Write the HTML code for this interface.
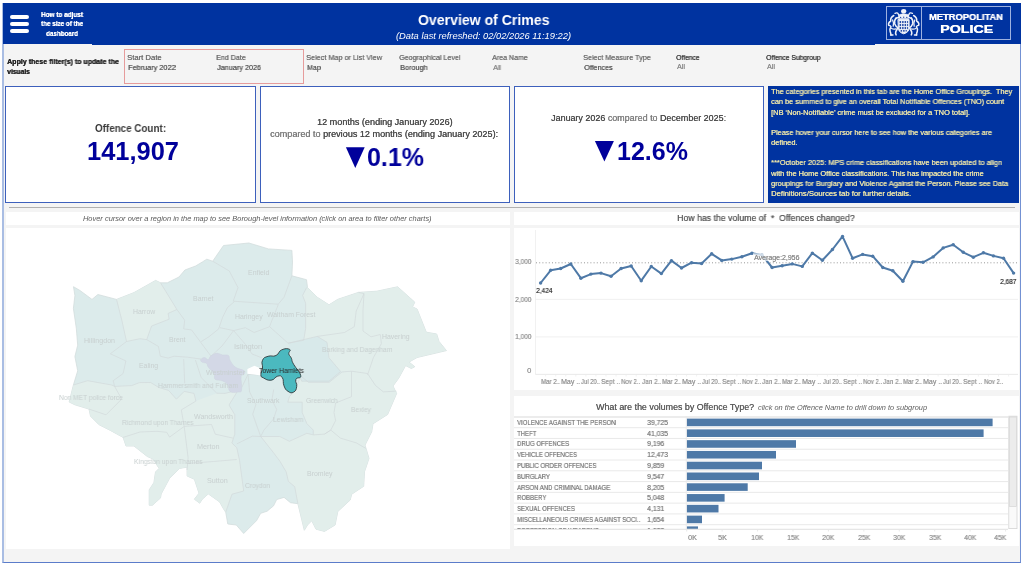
<!DOCTYPE html>
<html><head><meta charset="utf-8">
<style>
*{box-sizing:border-box;margin:0;padding:0}
html,body{width:1023px;height:565px;overflow:hidden;background:#fff;font-family:"Liberation Sans",sans-serif}
.t{position:absolute;white-space:pre;line-height:1;will-change:transform}
.r{position:absolute}
.bar{position:absolute;left:10px;width:19px;height:4px;border-radius:2px;background:#fff}
.card{position:absolute;top:86px;height:117px;background:#fff;border:1.8px solid #3d60bc}
svg{position:absolute;left:0;top:0;overflow:visible}
</style></head><body>
<div class="r" style="left:2px;top:3px;width:1019px;height:560.2px;background:#f4f4f4;border-left:2px solid #a9bde3;border-right:1.5px solid #7391d3;border-bottom:1.6px solid #5b7cca"></div>
<div class="r" style="left:3px;top:3px;width:1018px;height:40.95px;background:#0033a0"></div>
<div class="r" style="left:91.7px;top:43.5px;width:783.5px;height:0.8px;background:#0033a0"></div>
<div class="bar" style="top:14.6px"></div>
<div class="bar" style="top:21.9px"></div>
<div class="bar" style="top:29.1px"></div>

<!-- logo frame -->
<div class="r" style="left:886px;top:5.8px;width:125px;height:34px;border:1px solid #9db1e0"></div>
<div class="r" style="left:921px;top:5.8px;width:1px;height:34px;background:#9db1e0"></div>
<svg width="1023" height="565">
<g fill="none" stroke="#eef1f9" stroke-linecap="round" stroke-linejoin="round">
<ellipse cx="903.7" cy="11.2" rx="2.6" ry="2.3" fill="#eef1f9" stroke="none"/>
<path d="M899.5,14.5 q4.2,-1.5 8.4,0 l0.8,4 h-10 z" fill="#eef1f9" stroke-width="0.6"/>
<path d="M895,13.3 q2.3,-1.3 3.4,1 q0.6,1.6 1.5,2.8 M912.4,13.3 q-2.3,-1.3 -3.4,1 q-0.6,1.6 -1.5,2.8" stroke-width="1.4"/>
<path d="M896,18.5 q3,-2.2 7.7,-2 q4.7,-0.2 7.7,2" stroke-width="1.5"/>
<path d="M898.3,19.6 h10.8 v8.2 q0,4.6 -5.4,6 q-5.4,-1.4 -5.4,-6 z" fill="#eef1f9" stroke-width="1"/>
<path d="M893.8,15.5 q-3.6,2 -3.1,5.5 q-2.6,1.5 -2.1,4.2 q2,0.2 2.4,1.6 q-1.6,2.2 -0.9,4.6 q0.8,2 0.9,3.6" stroke-width="1.5"/>
<path d="M896.2,17.8 q-2.4,3 -1.4,6.2 q1,2.6 3,3.6 q-1.2,2.6 -2,4.1 q-0.6,1.6 0.3,3.1" stroke-width="1.6"/>
<path d="M892.6,20 q1.6,3 0.6,6.2 M891.6,28.5 q2,1 4.2,0.4 M890.5,35 h2.5" stroke-width="1.3"/>
<path d="M913.6,15.5 q3.6,2 3.1,5.5 q2.6,1.5 2.1,4.2 q-2,0.2 -2.4,1.6 q1.6,2.2 0.9,4.6 q-0.8,2 -0.9,3.6" stroke-width="1.5"/>
<path d="M911.2,17.8 q2.4,3 1.4,6.2 q-1,2.6 -3,3.6 q1.2,2.6 2,4.1 q0.6,1.6 -0.3,3.1" stroke-width="1.6"/>
<path d="M914.8,20 q-1.6,3 -0.6,6.2 M915.8,28.5 q-2,1 -4.2,0.4 M914.4,35 h2.5" stroke-width="1.3"/>
</g>
<g fill="#2a4fa8">
<rect x="899.6" y="21" width="1.5" height="2.1"/><rect x="902.1" y="21" width="1.5" height="2.1"/><rect x="904.6" y="21" width="1.5" height="2.1"/><rect x="907.1" y="21" width="1" height="2.1"/>
<rect x="899.6" y="24" width="1.5" height="2.1"/><rect x="902.1" y="24" width="1.5" height="2.1"/><rect x="904.6" y="24" width="1.5" height="2.1"/><rect x="907.1" y="24" width="1" height="2.1"/>
<rect x="899.6" y="27" width="1.5" height="2.1"/><rect x="902.1" y="27" width="1.5" height="2.1"/><rect x="904.6" y="27" width="1.5" height="2.1"/><rect x="907.1" y="27" width="1" height="2.1"/>
<rect x="900.6" y="30" width="1.5" height="1.7"/><rect x="903.1" y="30" width="1.5" height="1.7"/><rect x="905.6" y="30" width="1.2" height="1.5"/>
<circle cx="900.6" cy="17.4" r="0.7"/><circle cx="903.7" cy="17.2" r="0.7"/><circle cx="906.8" cy="17.4" r="0.7"/>
</g>
</svg>


<!-- filter box -->
<div class="r" style="left:124px;top:49px;width:180px;height:35px;border:1px solid #e69c9c"></div>

<!-- cards -->
<div class="card" style="left:5px;width:251px"></div>
<div class="card" style="left:259.5px;width:250.5px"></div>
<div class="card" style="left:514px;width:250px"></div>
<div class="r" style="left:768px;top:86px;width:251px;height:116.5px;background:#0033a0"></div>
<svg width="1023" height="565">
<polygon points="345.9,147.3 364.7,147.3 355.3,168" fill="#00009b"/>
<polygon points="594.9,140.9 613.9,140.9 604.4,161.5" fill="#00009b"/>
</svg>

<!-- separator -->
<div class="r" style="left:8.5px;top:207px;width:1006px;height:1.2px;background:#b0b0b0"></div>

<!-- panels -->
<div class="r" style="left:5.7px;top:212.4px;width:504.5px;height:12.3px;background:#fff"></div>
<div class="r" style="left:5.7px;top:228px;width:504.5px;height:321.4px;background:#fff"></div>
<div class="r" style="left:514px;top:212.4px;width:505.3px;height:12.3px;background:#fff"></div>
<div class="r" style="left:514px;top:228px;width:505.3px;height:161.7px;background:#fff"></div>
<div class="r" style="left:514px;top:396px;width:505.3px;height:150px;background:#fff"></div>

<svg width="1023" height="565">
<polygon points="73.5,286.7 80,290.5 92,299.4 97.9,294.5 116.5,299.4 134,292.6 155.6,280.4 160.5,282.8 167.3,282.8 179,277 184.9,270 195.6,266 202.3,262 206.8,259.2 212.7,261.2 223.5,245.5 248.9,243 268.4,248.9 291.9,250.4 292.5,262 291.9,275.8 306.5,279.7 307.5,287.6 317.3,297.3 329,304.8 337.8,299.3 358.4,292.4 376.8,291.2 397.6,286.8 414.8,302.2 412.5,306.8 417.1,309.1 426.3,332.2 436.7,334 439,341.4 446.4,350.6 417.1,357.5 409,362.1 414.8,366.7 411.4,368.5 405.6,365.6 398.7,378.2 393,386 396.6,393.5 387.6,414.5 373,423.8 371.7,431.8 365,445.1 369,458.4 364.5,471.7 363.7,486.3 351.7,494.2 350.2,500 337.8,511.5 335.1,525 324.5,531.4 316,529.2 311.7,520.7 307.5,525 304.3,530.3 297.9,503.7 290.5,502.7 284.1,497.4 276.7,499.5 273.5,505.9 267.1,511.2 260.7,513.3 256.5,520.7 243.7,533.5 236.3,525 227.8,524 225.7,512.2 223.6,509 219.6,501.9 208.3,493.9 202.3,499.2 199.7,503.2 194.4,499.2 199,493.2 194.4,479.3 187.1,476 187,467.2 179.5,468.4 169.6,478.3 161.2,493.9 160.5,497.9 152.5,505.2 149.2,505.2 149.2,489.9 153.9,482.6 155.5,472 159.1,468.4 153,459 147.3,456.5 134,446 126,446 123.1,437.4 110.3,430.4 99,424.7 90.5,416.2 89,409.1 74.9,404.8 69.2,402 73.4,385 77.7,370.8 74.9,356.6 77.7,345.2 76.3,328.2 73.4,308.4 74.9,295.6" fill="#dcebeb" stroke="#d3dddd" stroke-width="0.8" stroke-linejoin="round"/>
<polygon points="116.5,299.4 134,292.6 155.6,280.4 160.5,282.8 176.9,309.5 168.1,313.4 169.1,319.2 151.6,326 146.7,339.6 139.9,338.7 126.5,341.5 121.7,319.7" fill="#e2eeeb"/>
<polygon points="73.4,385 87.6,380.7 111.7,385 114.6,386.4 131.7,385.6 139.5,382.6 150.6,382.5 158.9,387.5 168.6,390.4 176.4,399.2 184.2,391.4 194,393.4 195.9,401.1 216.8,393.2 225.1,393.4 236.8,390.4 237,392 229,405 234.8,414.8 234.8,434.2 231.9,443 236.8,447.8 239.5,460.2 243.7,491 232,494.2 225.7,512.2 223.6,509 219.6,501.9 208.3,493.9 202.3,499.2 199.7,503.2 194.4,499.2 199,493.2 194.4,479.3 187.1,476 187,467.2 179.5,468.4 169.6,478.3 161.2,493.9 160.5,497.9 152.5,505.2 149.2,505.2 149.2,489.9 153.9,482.6 155.5,472 159.1,468.4 153,459 147.3,456.5 134,446 126,446 123.1,437.4 110.3,430.4 99,424.7 90.5,416.2 89,409.1 74.9,404.8 69.2,402 73.4,385" fill="#e2eeeb"/>
<polygon points="296.7,386.6 300.6,375.9 308.5,382.3 329.2,382.3 342,372 351.5,371.2 367.5,373.5 375.5,385.5 383.4,391.9 396.2,391.1 396.6,393.5 387.6,414.5 373,423.8 371.7,431.8 365,445.1 369,458.4 364.5,471.7 363.7,486.3 351.7,494.2 350.2,500 337.8,511.5 335.1,525 324.5,531.4 316,529.2 311.7,520.7 307.5,525 304.3,530.3 297.9,503.7 294.7,486.7 288.4,481.4 286.2,471.9 279.9,461.2 273.5,452.7 260.7,436.5 279.8,436.5 289.4,441.3 306.9,433.3 313.3,434.9 313.3,430.1 306.9,423.7 302.2,412.6 302.2,402.2 287.8,402.2 289.4,396.7 293.6,392.1" fill="#e2eeeb"/>
<polygon points="307.5,287.6 317.3,297.3 329,304.8 337.8,299.3 358.4,292.4 376.8,291.2 397.6,286.8 414.8,302.2 412.5,306.8 417.1,309.1 426.3,332.2 436.7,334 439,341.4 446.4,350.6 417.1,357.5 409,362.1 414.8,366.7 411.4,368.5 405.6,365.6 398.7,378.2 393,386 396.6,393.5 396.2,391.1 383.4,391.9 375.5,385.5 367.5,373.5 351.5,371.2 340.6,371.5 329,357.8 327,342.3 317.3,336.4 303.7,340.3 305.6,328.6 305.6,303.2 302.6,295.4" fill="#e2eeeb"/>
<polygon points="288.1,343.2 317.3,336.4 327,342.3 329,357.8 340.6,371.5 329,381.2 301.7,381.2 294,363.7" fill="#d8e9ea"/>
<polyline points="116.5,299.4 121.7,319.7 126.5,341.5" fill="none" stroke="#d2dadb" stroke-width="0.7" stroke-linejoin="round"/>
<polyline points="160.5,282.8 176.9,309.5 168.1,313.4 169.1,319.2 151.6,326 146.7,339.6 139.9,338.7 126.5,341.5" fill="none" stroke="#d2dadb" stroke-width="0.7" stroke-linejoin="round"/>
<polyline points="126.5,341.5 110.3,353.8 125.9,360.9 123.1,373.6 113.2,380.7 114.6,386.4" fill="none" stroke="#d2dadb" stroke-width="0.7" stroke-linejoin="round"/>
<polyline points="73.4,385 87.6,380.7 111.7,385 114.6,386.4 121.7,399.1 106,414.8 89,409.1" fill="none" stroke="#d2dadb" stroke-width="0.7" stroke-linejoin="round"/>
<polyline points="114.6,386.4 131.7,385.6 139.5,382.6 150.6,382.5 158.9,387.5 168.6,390.4 176.4,399.2 184.2,391.4 194,393.4 195.9,401.1" fill="none" stroke="#d2dadb" stroke-width="0.7" stroke-linejoin="round"/>
<polyline points="176.9,309.5 184.7,320.2 183.7,328.9 191.5,329.9 211,356.2" fill="none" stroke="#d2dadb" stroke-width="0.7" stroke-linejoin="round"/>
<polyline points="146.7,339.6 158.4,346.4 160.3,356.2 168.1,358.1 174,356.2 187.6,357.2 201.2,359.1" fill="none" stroke="#d2dadb" stroke-width="0.7" stroke-linejoin="round"/>
<polyline points="183.7,359.1 184.7,383.4" fill="none" stroke="#d2dadb" stroke-width="0.7" stroke-linejoin="round"/>
<polyline points="195.4,360 201.2,377.6 216.8,393.2" fill="none" stroke="#d2dadb" stroke-width="0.7" stroke-linejoin="round"/>
<polyline points="201.2,341.6 209,336.7 218.7,328.9 222.6,317.3 227.5,307.5 234.3,301.7" fill="none" stroke="#d2dadb" stroke-width="0.7" stroke-linejoin="round"/>
<polyline points="212.7,261.2 229.3,271 238,287.6 233.2,301.2" fill="none" stroke="#d2dadb" stroke-width="0.7" stroke-linejoin="round"/>
<polyline points="233.2,301.2 278.2,304.2" fill="none" stroke="#d2dadb" stroke-width="0.7" stroke-linejoin="round"/>
<polyline points="291.9,275.8 284,297.3 278.2,304.2" fill="none" stroke="#d2dadb" stroke-width="0.7" stroke-linejoin="round"/>
<polyline points="278.4,304.3 270.6,323.8 269.6,326.7" fill="none" stroke="#d2dadb" stroke-width="0.7" stroke-linejoin="round"/>
<polyline points="220,327.7 233.6,330.6 245.3,327.7 254.1,332.5 269.6,326.7" fill="none" stroke="#d2dadb" stroke-width="0.7" stroke-linejoin="round"/>
<polyline points="269.6,326.7 288.1,343.2 303.7,340.3" fill="none" stroke="#d2dadb" stroke-width="0.7" stroke-linejoin="round"/>
<polyline points="306.5,287.6 302.6,295.4 305.6,303.2 305.6,328.6 303.7,340.3" fill="none" stroke="#d2dadb" stroke-width="0.7" stroke-linejoin="round"/>
<polyline points="288.1,343.2 317.3,336.4 327,342.3 329,357.8 340.6,371.5 329,381.2 301.7,381.2 294,363.7" fill="none" stroke="#d2dadb" stroke-width="0.7" stroke-linejoin="round"/>
<polyline points="317.3,336.4 344.5,332.5 354.3,326.7 356.2,311.1 364,293.6 358.4,292.4" fill="none" stroke="#d2dadb" stroke-width="0.7" stroke-linejoin="round"/>
<polyline points="364,293.6 363,310.3 363,331 371,336.8 380.3,334.5 381.4,343.7 373.4,357.5 367.6,374.8" fill="none" stroke="#d2dadb" stroke-width="0.7" stroke-linejoin="round"/>
<polyline points="233.6,330.6 245.3,344.2 252.1,354 261.8,357.8" fill="none" stroke="#d2dadb" stroke-width="0.7" stroke-linejoin="round"/>
<polyline points="211,356.2 222,346 233.6,330.6" fill="none" stroke="#d2dadb" stroke-width="0.7" stroke-linejoin="round"/>
<polyline points="241.8,387.4 248,374.3 260.9,375" fill="none" stroke="#d2dadb" stroke-width="0.7" stroke-linejoin="round"/>
<polyline points="248,374.3 249.6,391.9 255.9,404.6 252.7,414.2 260.7,436.5" fill="none" stroke="#d2dadb" stroke-width="0.7" stroke-linejoin="round"/>
<polyline points="237,392 229,405 234.8,414.8 234.8,434.2 231.9,443" fill="none" stroke="#d2dadb" stroke-width="0.7" stroke-linejoin="round"/>
<polyline points="216.8,393.2 225.1,393.4 236.8,390.4" fill="none" stroke="#d2dadb" stroke-width="0.7" stroke-linejoin="round"/>
<polyline points="195.9,401.1 181.3,409.9 184.2,426.4" fill="none" stroke="#d2dadb" stroke-width="0.7" stroke-linejoin="round"/>
<polyline points="123.1,437.4 140,432 157,431.3 166.7,432.3 169.6,437.1 184.2,426.4" fill="none" stroke="#d2dadb" stroke-width="0.7" stroke-linejoin="round"/>
<polyline points="184.2,426.4 211.5,424.5 215.3,434.2 232.9,438.1" fill="none" stroke="#d2dadb" stroke-width="0.7" stroke-linejoin="round"/>
<polyline points="184.2,426.4 188.1,457.6 187.1,470" fill="none" stroke="#d2dadb" stroke-width="0.7" stroke-linejoin="round"/>
<polyline points="188.1,463.4 213.4,461.5 236.8,459.5" fill="none" stroke="#d2dadb" stroke-width="0.7" stroke-linejoin="round"/>
<polyline points="231.9,443 236.8,447.8 239.5,460.2 243.7,491 232,494.2 225.7,512.2" fill="none" stroke="#d2dadb" stroke-width="0.7" stroke-linejoin="round"/>
<polyline points="260.7,436.5 273.5,452.7 279.9,461.2 286.2,471.9 288.4,481.4 294.7,486.7 297.9,503.7" fill="none" stroke="#d2dadb" stroke-width="0.7" stroke-linejoin="round"/>
<polyline points="236.8,443.9 252.3,436.2 260.7,436.5" fill="none" stroke="#d2dadb" stroke-width="0.7" stroke-linejoin="round"/>
<polyline points="273.7,389.5 271.9,399.8 276.7,409.4 273.5,419 263.9,430.1 260.7,436.5" fill="none" stroke="#d2dadb" stroke-width="0.7" stroke-linejoin="round"/>
<polyline points="260.7,436.5 279.8,436.5 289.4,441.3 306.9,433.3 313.3,434.9 324.5,434.1" fill="none" stroke="#d2dadb" stroke-width="0.7" stroke-linejoin="round"/>
<polyline points="287.8,402.2 302.2,402.2 302.2,412.6 306.9,423.7 313.3,430.1 313.3,434.9" fill="none" stroke="#d2dadb" stroke-width="0.7" stroke-linejoin="round"/>
<polyline points="296.7,386.6 300.6,375.9 308.5,382.3 329.2,382.3 342,372 351.5,371.2 367.5,373.5 375.5,385.5 383.4,391.9 396.2,391.1" fill="none" stroke="#d2dadb" stroke-width="0.7" stroke-linejoin="round"/>
<polyline points="351.5,371.2 351.5,396.7 335.6,403 334,412.6 335.6,420.6 330.8,430.1 324.5,434.1" fill="none" stroke="#d2dadb" stroke-width="0.7" stroke-linejoin="round"/>
<polyline points="324.5,434.1 330.8,430.1 340.4,438.1 356.3,442.9 365.9,448.4" fill="none" stroke="#d2dadb" stroke-width="0.7" stroke-linejoin="round"/>
<polyline points="287.8,402.2 289.4,396.7 293.6,392.1" fill="none" stroke="#d2dadb" stroke-width="0.7" stroke-linejoin="round"/>
<path d="M200.70,359.70 C201.12,358.74 202.90,357.52 204.40,357.50 C205.90,357.48 206.92,359.90 208.20,359.60 C209.48,359.30 209.10,357.26 210.80,356.00 C212.50,354.74 214.36,353.52 216.70,353.30 C219.04,353.08 220.16,354.48 222.50,354.90 C224.84,355.32 226.90,354.34 228.40,355.40 C229.90,356.46 228.62,357.86 230.00,360.20 C231.38,362.54 232.44,364.98 235.30,367.10 C238.16,369.22 242.60,369.32 244.30,370.80 C246.00,372.28 244.44,373.32 243.80,374.50 C243.16,375.68 241.54,373.60 241.10,376.70 C240.66,379.80 242.24,386.92 241.60,390.00 C240.96,393.08 240.22,391.80 237.90,392.10 C235.58,392.40 232.02,393.00 230.00,391.50 C227.98,390.00 229.30,386.72 227.80,384.60 C226.30,382.48 225.04,381.96 222.50,380.90 C219.96,379.84 216.80,380.68 215.10,379.30 C213.40,377.92 215.38,376.44 214.00,374.00 C212.62,371.56 209.68,369.22 208.20,367.10 C206.72,364.98 207.78,364.36 206.60,363.40 C205.42,362.44 203.48,363.04 202.30,362.30 C201.12,361.56 200.28,360.66 200.70,359.70Z" fill="#d3d8e6" stroke="#cdd3df" stroke-width="0.5"/>
<polygon points="247.4,369 254.5,365.8 260.1,368.2 260.9,375.4 247.4,373.8" fill="#ffffff"/>
<path d="M262.50,360.30 C263.99,357.13 264.50,357.58 268.10,356.30 C271.70,355.02 272.40,357.21 276.00,355.50 C279.60,353.79 277.97,351.53 281.60,349.90 C285.23,348.27 287.68,348.33 289.60,349.40 C291.52,350.47 288.37,351.63 288.80,353.90 C289.23,356.17 289.92,355.13 291.20,357.90 C292.48,360.67 291.07,359.63 293.60,364.30 C296.13,368.97 300.09,371.37 300.70,375.40 C301.31,379.43 296.97,376.41 295.90,379.40 C294.83,382.39 297.31,383.21 296.70,386.60 C296.09,389.99 295.92,390.85 293.60,392.10 C291.28,393.35 290.56,392.98 288.00,391.30 C285.44,389.62 285.49,389.40 284.00,385.80 C282.51,382.20 284.11,380.36 282.40,377.80 C280.69,375.24 280.59,375.56 277.60,376.20 C274.61,376.84 275.01,379.77 271.20,380.20 C267.39,380.63 266.05,379.29 263.30,377.80 C260.55,376.31 261.11,377.16 260.90,374.60 C260.69,372.04 262.07,372.01 262.50,368.20 C262.93,364.39 261.01,363.47 262.50,360.30Z" fill="#4bb9bf" stroke="#2f3a3c" stroke-width="0.9" stroke-linejoin="round"/>
</svg>
<svg width="1023" height="565">
<line x1="535.5" y1="299.4" x2="1018" y2="299.4" stroke="#ececec" stroke-width="0.8"/>
<line x1="535.5" y1="336.9" x2="1018" y2="336.9" stroke="#ececec" stroke-width="0.8"/>
<line x1="535.5" y1="230" x2="535.5" y2="374.4" stroke="#ededed" stroke-width="0.8"/>
<line x1="535.5" y1="374.4" x2="1018" y2="374.4" stroke="#e4e4e4" stroke-width="0.8"/>
<line x1="545.63" y1="374.4" x2="545.63" y2="376.5" stroke="#ececec" stroke-width="0.7"/>
<line x1="555.70" y1="374.4" x2="555.70" y2="376.5" stroke="#ececec" stroke-width="0.7"/>
<line x1="565.76" y1="374.4" x2="565.76" y2="376.5" stroke="#ececec" stroke-width="0.7"/>
<line x1="575.82" y1="374.4" x2="575.82" y2="376.5" stroke="#ececec" stroke-width="0.7"/>
<line x1="585.89" y1="374.4" x2="585.89" y2="376.5" stroke="#ececec" stroke-width="0.7"/>
<line x1="595.95" y1="374.4" x2="595.95" y2="376.5" stroke="#ececec" stroke-width="0.7"/>
<line x1="606.01" y1="374.4" x2="606.01" y2="376.5" stroke="#ececec" stroke-width="0.7"/>
<line x1="616.08" y1="374.4" x2="616.08" y2="376.5" stroke="#ececec" stroke-width="0.7"/>
<line x1="626.14" y1="374.4" x2="626.14" y2="376.5" stroke="#ececec" stroke-width="0.7"/>
<line x1="636.21" y1="374.4" x2="636.21" y2="376.5" stroke="#ececec" stroke-width="0.7"/>
<line x1="646.27" y1="374.4" x2="646.27" y2="376.5" stroke="#ececec" stroke-width="0.7"/>
<line x1="656.33" y1="374.4" x2="656.33" y2="376.5" stroke="#ececec" stroke-width="0.7"/>
<line x1="666.40" y1="374.4" x2="666.40" y2="376.5" stroke="#ececec" stroke-width="0.7"/>
<line x1="676.46" y1="374.4" x2="676.46" y2="376.5" stroke="#ececec" stroke-width="0.7"/>
<line x1="686.53" y1="374.4" x2="686.53" y2="376.5" stroke="#ececec" stroke-width="0.7"/>
<line x1="696.59" y1="374.4" x2="696.59" y2="376.5" stroke="#ececec" stroke-width="0.7"/>
<line x1="706.65" y1="374.4" x2="706.65" y2="376.5" stroke="#ececec" stroke-width="0.7"/>
<line x1="716.72" y1="374.4" x2="716.72" y2="376.5" stroke="#ececec" stroke-width="0.7"/>
<line x1="726.78" y1="374.4" x2="726.78" y2="376.5" stroke="#ececec" stroke-width="0.7"/>
<line x1="736.84" y1="374.4" x2="736.84" y2="376.5" stroke="#ececec" stroke-width="0.7"/>
<line x1="746.91" y1="374.4" x2="746.91" y2="376.5" stroke="#ececec" stroke-width="0.7"/>
<line x1="756.97" y1="374.4" x2="756.97" y2="376.5" stroke="#ececec" stroke-width="0.7"/>
<line x1="767.04" y1="374.4" x2="767.04" y2="376.5" stroke="#ececec" stroke-width="0.7"/>
<line x1="777.10" y1="374.4" x2="777.10" y2="376.5" stroke="#ececec" stroke-width="0.7"/>
<line x1="787.16" y1="374.4" x2="787.16" y2="376.5" stroke="#ececec" stroke-width="0.7"/>
<line x1="797.23" y1="374.4" x2="797.23" y2="376.5" stroke="#ececec" stroke-width="0.7"/>
<line x1="807.29" y1="374.4" x2="807.29" y2="376.5" stroke="#ececec" stroke-width="0.7"/>
<line x1="817.36" y1="374.4" x2="817.36" y2="376.5" stroke="#ececec" stroke-width="0.7"/>
<line x1="827.42" y1="374.4" x2="827.42" y2="376.5" stroke="#ececec" stroke-width="0.7"/>
<line x1="837.48" y1="374.4" x2="837.48" y2="376.5" stroke="#ececec" stroke-width="0.7"/>
<line x1="847.55" y1="374.4" x2="847.55" y2="376.5" stroke="#ececec" stroke-width="0.7"/>
<line x1="857.61" y1="374.4" x2="857.61" y2="376.5" stroke="#ececec" stroke-width="0.7"/>
<line x1="867.67" y1="374.4" x2="867.67" y2="376.5" stroke="#ececec" stroke-width="0.7"/>
<line x1="877.74" y1="374.4" x2="877.74" y2="376.5" stroke="#ececec" stroke-width="0.7"/>
<line x1="887.80" y1="374.4" x2="887.80" y2="376.5" stroke="#ececec" stroke-width="0.7"/>
<line x1="897.87" y1="374.4" x2="897.87" y2="376.5" stroke="#ececec" stroke-width="0.7"/>
<line x1="907.93" y1="374.4" x2="907.93" y2="376.5" stroke="#ececec" stroke-width="0.7"/>
<line x1="917.99" y1="374.4" x2="917.99" y2="376.5" stroke="#ececec" stroke-width="0.7"/>
<line x1="928.06" y1="374.4" x2="928.06" y2="376.5" stroke="#ececec" stroke-width="0.7"/>
<line x1="938.12" y1="374.4" x2="938.12" y2="376.5" stroke="#ececec" stroke-width="0.7"/>
<line x1="948.19" y1="374.4" x2="948.19" y2="376.5" stroke="#ececec" stroke-width="0.7"/>
<line x1="958.25" y1="374.4" x2="958.25" y2="376.5" stroke="#ececec" stroke-width="0.7"/>
<line x1="968.31" y1="374.4" x2="968.31" y2="376.5" stroke="#ececec" stroke-width="0.7"/>
<line x1="978.38" y1="374.4" x2="978.38" y2="376.5" stroke="#ececec" stroke-width="0.7"/>
<line x1="988.44" y1="374.4" x2="988.44" y2="376.5" stroke="#ececec" stroke-width="0.7"/>
<line x1="998.50" y1="374.4" x2="998.50" y2="376.5" stroke="#ececec" stroke-width="0.7"/>
<line x1="1008.57" y1="374.4" x2="1008.57" y2="376.5" stroke="#ececec" stroke-width="0.7"/>
<line x1="536" y1="262.8" x2="1018" y2="262.8" stroke="#8c8c8c" stroke-width="0.9" stroke-dasharray="1,2.2"/>
<polyline fill="none" stroke="#4e79a7" stroke-width="2" stroke-linejoin="round" points="540.60,283 550.66,270.3 560.73,268.5 570.79,264 580.86,278.2 590.92,274.1 600.98,273.1 611.05,276.2 621.11,268.5 631.17,266 641.24,280.7 651.30,266.5 661.37,273.6 671.43,260.6 681.49,268 691.56,262.7 701.62,263.5 711.69,253.8 721.75,260.4 731.81,259.1 741.88,256.8 751.94,253.3 762.00,255 772.07,267.5 782.13,265.7 792.20,263.9 802.26,266.4 812.32,253.1 822.39,260.3 832.45,249.5 842.51,236.4 852.58,258.2 862.64,254.4 872.71,256.2 882.77,267.5 892.83,270.8 902.90,281.3 912.96,261.6 923.03,262.3 933.09,256.9 943.15,247.9 953.22,244.8 963.28,252.3 973.34,257.2 983.41,252.8 993.47,255.9 1003.54,258.2 1013.60,273.1"/>
<circle cx="540.60" cy="283" r="1.7" fill="#4e79a7"/>
<circle cx="550.66" cy="270.3" r="1.7" fill="#4e79a7"/>
<circle cx="560.73" cy="268.5" r="1.7" fill="#4e79a7"/>
<circle cx="570.79" cy="264" r="1.7" fill="#4e79a7"/>
<circle cx="580.86" cy="278.2" r="1.7" fill="#4e79a7"/>
<circle cx="590.92" cy="274.1" r="1.7" fill="#4e79a7"/>
<circle cx="600.98" cy="273.1" r="1.7" fill="#4e79a7"/>
<circle cx="611.05" cy="276.2" r="1.7" fill="#4e79a7"/>
<circle cx="621.11" cy="268.5" r="1.7" fill="#4e79a7"/>
<circle cx="631.17" cy="266" r="1.7" fill="#4e79a7"/>
<circle cx="641.24" cy="280.7" r="1.7" fill="#4e79a7"/>
<circle cx="651.30" cy="266.5" r="1.7" fill="#4e79a7"/>
<circle cx="661.37" cy="273.6" r="1.7" fill="#4e79a7"/>
<circle cx="671.43" cy="260.6" r="1.7" fill="#4e79a7"/>
<circle cx="681.49" cy="268" r="1.7" fill="#4e79a7"/>
<circle cx="691.56" cy="262.7" r="1.7" fill="#4e79a7"/>
<circle cx="701.62" cy="263.5" r="1.7" fill="#4e79a7"/>
<circle cx="711.69" cy="253.8" r="1.7" fill="#4e79a7"/>
<circle cx="721.75" cy="260.4" r="1.7" fill="#4e79a7"/>
<circle cx="731.81" cy="259.1" r="1.7" fill="#4e79a7"/>
<circle cx="741.88" cy="256.8" r="1.7" fill="#4e79a7"/>
<circle cx="751.94" cy="253.3" r="1.7" fill="#4e79a7"/>
<circle cx="762.00" cy="255" r="1.7" fill="#4e79a7"/>
<circle cx="772.07" cy="267.5" r="1.7" fill="#4e79a7"/>
<circle cx="782.13" cy="265.7" r="1.7" fill="#4e79a7"/>
<circle cx="792.20" cy="263.9" r="1.7" fill="#4e79a7"/>
<circle cx="802.26" cy="266.4" r="1.7" fill="#4e79a7"/>
<circle cx="812.32" cy="253.1" r="1.7" fill="#4e79a7"/>
<circle cx="822.39" cy="260.3" r="1.7" fill="#4e79a7"/>
<circle cx="832.45" cy="249.5" r="1.7" fill="#4e79a7"/>
<circle cx="842.51" cy="236.4" r="1.7" fill="#4e79a7"/>
<circle cx="852.58" cy="258.2" r="1.7" fill="#4e79a7"/>
<circle cx="862.64" cy="254.4" r="1.7" fill="#4e79a7"/>
<circle cx="872.71" cy="256.2" r="1.7" fill="#4e79a7"/>
<circle cx="882.77" cy="267.5" r="1.7" fill="#4e79a7"/>
<circle cx="892.83" cy="270.8" r="1.7" fill="#4e79a7"/>
<circle cx="902.90" cy="281.3" r="1.7" fill="#4e79a7"/>
<circle cx="912.96" cy="261.6" r="1.7" fill="#4e79a7"/>
<circle cx="923.03" cy="262.3" r="1.7" fill="#4e79a7"/>
<circle cx="933.09" cy="256.9" r="1.7" fill="#4e79a7"/>
<circle cx="943.15" cy="247.9" r="1.7" fill="#4e79a7"/>
<circle cx="953.22" cy="244.8" r="1.7" fill="#4e79a7"/>
<circle cx="963.28" cy="252.3" r="1.7" fill="#4e79a7"/>
<circle cx="973.34" cy="257.2" r="1.7" fill="#4e79a7"/>
<circle cx="983.41" cy="252.8" r="1.7" fill="#4e79a7"/>
<circle cx="993.47" cy="255.9" r="1.7" fill="#4e79a7"/>
<circle cx="1003.54" cy="258.2" r="1.7" fill="#4e79a7"/>
<circle cx="1013.60" cy="273.1" r="1.7" fill="#4e79a7"/>
<rect x="753" y="253.3" width="46" height="7.6" fill="#fff" fill-opacity="0.72"/>
</svg>
<svg width="1023" height="565">
<defs><clipPath id="bc"><rect x="514" y="416" width="504" height="113"/></clipPath></defs>
<g clip-path="url(#bc)">
<rect x="514" y="416" width="172.5" height="113" fill="#fff"/>
<line x1="514" y1="416.90" x2="1008" y2="416.90" stroke="#e6e6e6" stroke-width="1.5"/>
<line x1="514" y1="427.68" x2="1008" y2="427.68" stroke="#e6e6e6" stroke-width="0.9"/>
<line x1="514" y1="438.46" x2="1008" y2="438.46" stroke="#e6e6e6" stroke-width="0.9"/>
<line x1="514" y1="449.24" x2="1008" y2="449.24" stroke="#e6e6e6" stroke-width="0.9"/>
<line x1="514" y1="460.02" x2="1008" y2="460.02" stroke="#e6e6e6" stroke-width="0.9"/>
<line x1="514" y1="470.80" x2="1008" y2="470.80" stroke="#e6e6e6" stroke-width="0.9"/>
<line x1="514" y1="481.58" x2="1008" y2="481.58" stroke="#e6e6e6" stroke-width="0.9"/>
<line x1="514" y1="492.36" x2="1008" y2="492.36" stroke="#e6e6e6" stroke-width="0.9"/>
<line x1="514" y1="503.14" x2="1008" y2="503.14" stroke="#e6e6e6" stroke-width="0.9"/>
<line x1="514" y1="513.92" x2="1008" y2="513.92" stroke="#e6e6e6" stroke-width="0.9"/>
<line x1="514" y1="524.70" x2="1008" y2="524.70" stroke="#e6e6e6" stroke-width="0.9"/>
<line x1="514" y1="535.48" x2="1008" y2="535.48" stroke="#e6e6e6" stroke-width="0.9"/>
<rect x="686.8" y="418.60" width="305.8" height="7.6" fill="#4e79a7"/>
<rect x="686.8" y="429.38" width="296.8" height="7.6" fill="#4e79a7"/>
<rect x="686.8" y="440.16" width="109.2" height="7.6" fill="#4e79a7"/>
<rect x="686.8" y="450.94" width="89.2" height="7.6" fill="#4e79a7"/>
<rect x="686.8" y="461.72" width="75.2" height="7.6" fill="#4e79a7"/>
<rect x="686.8" y="472.50" width="72.2" height="7.6" fill="#4e79a7"/>
<rect x="686.8" y="483.28" width="60.9" height="7.6" fill="#4e79a7"/>
<rect x="686.8" y="494.06" width="37.8" height="7.6" fill="#4e79a7"/>
<rect x="686.8" y="504.84" width="31.7" height="7.6" fill="#4e79a7"/>
<rect x="686.8" y="515.62" width="15.2" height="7.6" fill="#4e79a7"/>
<rect x="686.8" y="526.40" width="11.2" height="7.6" fill="#4e79a7"/>
<line x1="686.3" y1="416" x2="686.3" y2="529" stroke="#e8e8e8" stroke-width="0.8"/>
</g>
<line x1="514" y1="529.2" x2="1008" y2="529.2" stroke="#e6e6e6" stroke-width="0.9"/>
<line x1="686.70" y1="529.2" x2="686.70" y2="531.5" stroke="#e0e0e0" stroke-width="0.7"/>
<line x1="722.13" y1="529.2" x2="722.13" y2="531.5" stroke="#e0e0e0" stroke-width="0.7"/>
<line x1="757.56" y1="529.2" x2="757.56" y2="531.5" stroke="#e0e0e0" stroke-width="0.7"/>
<line x1="792.99" y1="529.2" x2="792.99" y2="531.5" stroke="#e0e0e0" stroke-width="0.7"/>
<line x1="828.42" y1="529.2" x2="828.42" y2="531.5" stroke="#e0e0e0" stroke-width="0.7"/>
<line x1="863.85" y1="529.2" x2="863.85" y2="531.5" stroke="#e0e0e0" stroke-width="0.7"/>
<line x1="899.28" y1="529.2" x2="899.28" y2="531.5" stroke="#e0e0e0" stroke-width="0.7"/>
<line x1="934.71" y1="529.2" x2="934.71" y2="531.5" stroke="#e0e0e0" stroke-width="0.7"/>
<line x1="970.14" y1="529.2" x2="970.14" y2="531.5" stroke="#e0e0e0" stroke-width="0.7"/>
<line x1="1005.57" y1="529.2" x2="1005.57" y2="531.5" stroke="#e0e0e0" stroke-width="0.7"/>
<rect x="1008.8" y="416.2" width="8.2" height="112.4" fill="#fafafa" stroke="#d4d4d4" stroke-width="0.8"/>
<rect x="1009.5" y="417" width="6.8" height="89.5" fill="#ececec" stroke="#d0d0d0" stroke-width="0.6"/>
</svg>
<div class='t' style='left:40.80px;top:10.63px;font-family:Liberation Sans;font-size:7.2px;font-weight:bold;font-style:normal;color:#fff;transform:scaleX(0.8870);transform-origin:0 0;text-shadow:0.2px 0 0 #fff;'>How to adjust</div>
<div class='t' style='left:40.70px;top:19.88px;font-family:Liberation Sans;font-size:7.2px;font-weight:bold;font-style:normal;color:#fff;transform:scaleX(0.8761);transform-origin:0 0;text-shadow:0.2px 0 0 #fff;'>the size of the</div>
<div class='t' style='left:45.70px;top:30.18px;font-family:Liberation Sans;font-size:7.2px;font-weight:bold;font-style:normal;color:#fff;transform:scaleX(0.8707);transform-origin:0 0;text-shadow:0.2px 0 0 #fff;'>dashboard</div>
<div class='t' style='left:417.90px;top:12.59px;font-family:Liberation Sans;font-size:14.6px;font-weight:bold;font-style:normal;color:#fff;transform:scaleX(0.9649);transform-origin:0 0;'>Overview of Crimes</div>
<div class='t' style='left:395.50px;top:31.78px;font-family:Liberation Sans;font-size:9.2px;font-weight:normal;font-style:italic;color:#fff;transform:scaleX(1.0147);transform-origin:0 0;'>(Data last refreshed: 02/02/2026 11:19:22)</div>
<div class='t' style='left:929.30px;top:12.11px;font-family:Liberation Sans;font-size:9.4px;font-weight:bold;font-style:normal;color:#fff;transform:scaleX(0.9931);transform-origin:0 0;text-shadow:0.3px 0 0 #fff;'>METROPOLITAN</div>
<div class='t' style='left:940.00px;top:23.98px;font-family:Liberation Sans;font-size:11.2px;font-weight:bold;font-style:normal;color:#fff;transform:scaleX(1.2723);transform-origin:0 0;text-shadow:0.4px 0 0 #fff;'>POLICE</div>
<div class='t' style='left:7.00px;top:59.47px;font-family:Liberation Sans;font-size:7.1px;font-weight:bold;font-style:normal;color:#222;transform:scaleX(0.9935);transform-origin:0 0;text-shadow:0.2px 0 0 #222;'>Apply these filter(s) to update the</div>
<div class='t' style='left:7.00px;top:69.27px;font-family:Liberation Sans;font-size:7.1px;font-weight:bold;font-style:normal;color:#222;transform:scaleX(0.9475);transform-origin:0 0;text-shadow:0.2px 0 0 #222;'>visuals</div>
<div class='t' style='left:126.90px;top:54.05px;font-family:Liberation Sans;font-size:7.7px;font-weight:normal;font-style:normal;color:#6e6e6e;transform:scaleX(0.9911);transform-origin:0 0;text-shadow:0.2px 0 0 #6e6e6e;'>Start Date</div>
<div class='t' style='left:127.90px;top:64.05px;font-family:Liberation Sans;font-size:7.7px;font-weight:normal;font-style:normal;color:#5c5c5c;transform:scaleX(0.9500);transform-origin:0 0;text-shadow:0.2px 0 0 #5c5c5c;'>February 2022</div>
<div class='t' style='left:216.20px;top:54.05px;font-family:Liberation Sans;font-size:7.7px;font-weight:normal;font-style:normal;color:#6e6e6e;transform:scaleX(0.9263);transform-origin:0 0;text-shadow:0.2px 0 0 #6e6e6e;'>End Date</div>
<div class='t' style='left:217.20px;top:64.05px;font-family:Liberation Sans;font-size:7.7px;font-weight:normal;font-style:normal;color:#5c5c5c;transform:scaleX(0.9443);transform-origin:0 0;text-shadow:0.2px 0 0 #5c5c5c;'>January 2026</div>
<div class='t' style='left:305.90px;top:54.05px;font-family:Liberation Sans;font-size:7.7px;font-weight:normal;font-style:normal;color:#6e6e6e;transform:scaleX(0.9465);transform-origin:0 0;text-shadow:0.2px 0 0 #6e6e6e;'>Select Map or List View</div>
<div class='t' style='left:306.90px;top:64.05px;font-family:Liberation Sans;font-size:7.7px;font-weight:normal;font-style:normal;color:#5c5c5c;transform:scaleX(0.9019);transform-origin:0 0;text-shadow:0.2px 0 0 #5c5c5c;'>Map</div>
<div class='t' style='left:398.80px;top:54.05px;font-family:Liberation Sans;font-size:7.7px;font-weight:normal;font-style:normal;color:#6e6e6e;transform:scaleX(0.9268);transform-origin:0 0;text-shadow:0.2px 0 0 #6e6e6e;'>Geographical Level</div>
<div class='t' style='left:399.80px;top:64.05px;font-family:Liberation Sans;font-size:7.7px;font-weight:normal;font-style:normal;color:#5c5c5c;transform:scaleX(0.9457);transform-origin:0 0;text-shadow:0.2px 0 0 #5c5c5c;'>Borough</div>
<div class='t' style='left:492.10px;top:54.05px;font-family:Liberation Sans;font-size:7.7px;font-weight:normal;font-style:normal;color:#6e6e6e;transform:scaleX(0.9180);transform-origin:0 0;text-shadow:0.2px 0 0 #6e6e6e;'>Area Name</div>
<div class='t' style='left:493.10px;top:64.05px;font-family:Liberation Sans;font-size:7.7px;font-weight:normal;font-style:normal;color:#8a8a8a;transform:scaleX(0.9360);transform-origin:0 0;text-shadow:0.2px 0 0 #8a8a8a;'>All</div>
<div class='t' style='left:582.60px;top:54.05px;font-family:Liberation Sans;font-size:7.7px;font-weight:normal;font-style:normal;color:#6e6e6e;transform:scaleX(0.9393);transform-origin:0 0;text-shadow:0.2px 0 0 #6e6e6e;'>Select Measure Type</div>
<div class='t' style='left:583.60px;top:64.05px;font-family:Liberation Sans;font-size:7.7px;font-weight:normal;font-style:normal;color:#5c5c5c;transform:scaleX(0.9334);transform-origin:0 0;text-shadow:0.2px 0 0 #5c5c5c;'>Offences</div>
<div class='t' style='left:675.60px;top:53.75px;font-family:Liberation Sans;font-size:7px;font-weight:normal;font-style:normal;color:#3a3a3a;transform:scaleX(0.9635);transform-origin:0 0;text-shadow:0.2px 0 0 #3a3a3a;'>Offence</div>
<div class='t' style='left:676.60px;top:62.65px;font-family:Liberation Sans;font-size:7px;font-weight:normal;font-style:normal;color:#8a8a8a;text-shadow:0.2px 0 0 #8a8a8a;'>All</div>
<div class='t' style='left:766.10px;top:53.75px;font-family:Liberation Sans;font-size:7px;font-weight:normal;font-style:normal;color:#3a3a3a;transform:scaleX(0.9611);transform-origin:0 0;text-shadow:0.2px 0 0 #3a3a3a;'>Offence Subgroup</div>
<div class='t' style='left:767.10px;top:62.65px;font-family:Liberation Sans;font-size:7px;font-weight:normal;font-style:normal;color:#8a8a8a;text-shadow:0.2px 0 0 #8a8a8a;'>All</div>
<div class='t' style='left:94.50px;top:123.50px;font-family:Liberation Sans;font-size:10px;font-weight:bold;font-style:normal;color:#3a3a3a;transform:scaleX(0.9831);transform-origin:0 0;'>Offence Count:</div>
<div class='t' style='left:86.70px;top:139.35px;font-family:Liberation Sans;font-size:25px;font-weight:bold;font-style:normal;color:#00009b;transform:scaleX(1.0180);transform-origin:0 0;'>141,907</div>
<div class='t' style='left:316.60px;top:117.59px;font-family:Liberation Sans;font-size:8.6px;font-weight:normal;font-style:normal;color:#4a4a4a;transform:scaleX(1.0543);transform-origin:0 0;text-shadow:0.2px 0 0 #4a4a4a;'>12 months (ending January 2026)</div>
<div class='t' style='left:269.90px;top:130.29px;font-family:Liberation Sans;font-size:8.6px;font-weight:normal;font-style:normal;color:#4a4a4a;transform:scaleX(1.0558);transform-origin:0 0;text-shadow:0.2px 0 0 #4a4a4a;'><span style='color:#8c8c8c'>compared to </span><span style='color:#4a4a4a'>previous 12 months (ending January 2025):</span></div>
<div class='t' style='left:366.50px;top:145.31px;font-family:Liberation Sans;font-size:25.4px;font-weight:bold;font-style:normal;color:#00009b;transform:scaleX(0.9849);transform-origin:0 0;'>0.1%</div>
<div class='t' style='left:551.20px;top:114.19px;font-family:Liberation Sans;font-size:8.6px;font-weight:normal;font-style:normal;color:#4a4a4a;transform:scaleX(1.0405);transform-origin:0 0;text-shadow:0.2px 0 0 #4a4a4a;'><span style='color:#4a4a4a'>January 2026 </span><span style='color:#8c8c8c'>compared to </span><span style='color:#4a4a4a'>December 2025</span><span style='color:#8c8c8c'>:</span></div>
<div class='t' style='left:616.80px;top:138.75px;font-family:Liberation Sans;font-size:25px;font-weight:bold;font-style:normal;color:#00009b;transform:scaleX(0.9931);transform-origin:0 0;'>12.6%</div>
<div class='t' style='left:770.80px;top:88.31px;font-family:Liberation Sans;font-size:7.4px;font-weight:normal;font-style:normal;color:#ebe4a8;transform:scaleX(0.9870);transform-origin:0 0;text-shadow:0.28px 0 0 #ebe4a8;'>The categories presented in this tab are the Home Office Groupings.  They</div>
<div class='t' style='left:770.80px;top:98.46px;font-family:Liberation Sans;font-size:7.4px;font-weight:normal;font-style:normal;color:#ebe4a8;transform:scaleX(0.9910);transform-origin:0 0;text-shadow:0.28px 0 0 #ebe4a8;'>can be summed to give an overall Total Notifiable Offences (TNO) count</div>
<div class='t' style='left:770.80px;top:108.61px;font-family:Liberation Sans;font-size:7.4px;font-weight:normal;font-style:normal;color:#ebe4a8;text-shadow:0.28px 0 0 #ebe4a8;'>[NB ‘Non-Notifiable’ crime must be excluded for a TNO total].</div>
<div class='t' style='left:770.80px;top:128.91px;font-family:Liberation Sans;font-size:7.4px;font-weight:normal;font-style:normal;color:#ebe4a8;transform:scaleX(0.9870);transform-origin:0 0;text-shadow:0.28px 0 0 #ebe4a8;'>Please hover your cursor here to see how the various categories are</div>
<div class='t' style='left:770.80px;top:139.06px;font-family:Liberation Sans;font-size:7.4px;font-weight:normal;font-style:normal;color:#ebe4a8;transform:scaleX(0.9881);transform-origin:0 0;text-shadow:0.28px 0 0 #ebe4a8;'>defined.</div>
<div class='t' style='left:770.80px;top:159.36px;font-family:Liberation Sans;font-size:7.4px;font-weight:normal;font-style:normal;color:#ebe4a8;transform:scaleX(0.9934);transform-origin:0 0;text-shadow:0.28px 0 0 #ebe4a8;'>***October 2025: MPS crime classifications have been updated to align</div>
<div class='t' style='left:770.80px;top:169.51px;font-family:Liberation Sans;font-size:7.4px;font-weight:normal;font-style:normal;color:#ebe4a8;text-shadow:0.28px 0 0 #ebe4a8;'>with the Home Office classifications. This has impacted the crime</div>
<div class='t' style='left:770.80px;top:179.66px;font-family:Liberation Sans;font-size:7.4px;font-weight:normal;font-style:normal;color:#ebe4a8;transform:scaleX(0.9883);transform-origin:0 0;text-shadow:0.28px 0 0 #ebe4a8;'>groupings for Burglary and Violence Against the Person. Please see Data</div>
<div class='t' style='left:770.80px;top:189.81px;font-family:Liberation Sans;font-size:7.4px;font-weight:normal;font-style:normal;color:#ebe4a8;transform:scaleX(1.0327);transform-origin:0 0;text-shadow:0.28px 0 0 #ebe4a8;'>Definitions/Sources tab for further details.</div>
<div class='t' style='left:82.70px;top:214.99px;font-family:Liberation Sans;font-size:7.3px;font-weight:normal;font-style:italic;color:#5a5a5a;transform:scaleX(1.0196);transform-origin:0 0;'>Hover cursor over a region in the map to see Borough-level information (click on area to filter other charts)</div>
<div class='t' style='left:677.10px;top:214.34px;font-family:Liberation Sans;font-size:8.9px;font-weight:normal;font-style:normal;color:#5e5e5e;transform:scaleX(0.9850);transform-origin:0 0;text-shadow:0.2px 0 0 #5e5e5e;'>How has the volume of  *  Offences changed?</div>
<div class='t' style='left:595.80px;top:402.54px;font-family:Liberation Sans;font-size:8.9px;font-weight:normal;font-style:normal;color:#5e5e5e;text-shadow:0.2px 0 0 #5e5e5e;'>What are the volumes by Offence Type?</div>
<div class='t' style='left:757.50px;top:404.15px;font-family:Liberation Sans;font-size:7px;font-weight:normal;font-style:italic;color:#5e5e5e;transform:scaleX(1.0542);transform-origin:0 0;'>click on the Offence Name to drill down to subgroup</div>
<div class='t' style='left:514.80px;top:257.95px;font-family:Liberation Sans;font-size:7px;font-weight:normal;font-style:normal;color:#9a9a9a;transform:scaleX(0.9412);transform-origin:0 0;text-shadow:0.2px 0 0 #9a9a9a;'>3,000</div>
<div class='t' style='left:514.80px;top:295.65px;font-family:Liberation Sans;font-size:7px;font-weight:normal;font-style:normal;color:#9a9a9a;transform:scaleX(0.9412);transform-origin:0 0;text-shadow:0.2px 0 0 #9a9a9a;'>2,000</div>
<div class='t' style='left:514.80px;top:333.45px;font-family:Liberation Sans;font-size:7px;font-weight:normal;font-style:normal;color:#9a9a9a;transform:scaleX(0.9412);transform-origin:0 0;text-shadow:0.2px 0 0 #9a9a9a;'>1,000</div>
<div class='t' style='left:527.10px;top:366.65px;font-family:Liberation Sans;font-size:7px;font-weight:normal;font-style:normal;color:#9a9a9a;transform:scaleX(1.0752);transform-origin:0 0;text-shadow:0.2px 0 0 #9a9a9a;'>0</div>
<div class='t' style='left:540.90px;top:377.75px;font-family:Liberation Sans;font-size:7px;font-weight:normal;font-style:normal;color:#9a9a9a;transform:scaleX(0.8717);transform-origin:0 0;text-shadow:0.2px 0 0 #9a9a9a;'>Mar 2..</div>
<div class='t' style='left:561.02px;top:377.75px;font-family:Liberation Sans;font-size:7px;font-weight:normal;font-style:normal;color:#9a9a9a;transform:scaleX(0.9967);transform-origin:0 0;text-shadow:0.2px 0 0 #9a9a9a;'>May ..</div>
<div class='t' style='left:581.14px;top:377.75px;font-family:Liberation Sans;font-size:7px;font-weight:normal;font-style:normal;color:#9a9a9a;transform:scaleX(0.8415);transform-origin:0 0;text-shadow:0.2px 0 0 #9a9a9a;'>Jul 20..</div>
<div class='t' style='left:601.26px;top:377.75px;font-family:Liberation Sans;font-size:7px;font-weight:normal;font-style:normal;color:#9a9a9a;transform:scaleX(0.9390);transform-origin:0 0;text-shadow:0.2px 0 0 #9a9a9a;'>Sept ..</div>
<div class='t' style='left:621.38px;top:377.75px;font-family:Liberation Sans;font-size:7px;font-weight:normal;font-style:normal;color:#9a9a9a;transform:scaleX(0.8563);transform-origin:0 0;text-shadow:0.2px 0 0 #9a9a9a;'>Nov 2..</div>
<div class='t' style='left:641.50px;top:377.75px;font-family:Liberation Sans;font-size:7px;font-weight:normal;font-style:normal;color:#9a9a9a;transform:scaleX(0.9041);transform-origin:0 0;text-shadow:0.2px 0 0 #9a9a9a;'>Jan 2..</div>
<div class='t' style='left:661.62px;top:377.75px;font-family:Liberation Sans;font-size:7px;font-weight:normal;font-style:normal;color:#9a9a9a;transform:scaleX(0.8717);transform-origin:0 0;text-shadow:0.2px 0 0 #9a9a9a;'>Mar 2..</div>
<div class='t' style='left:681.74px;top:377.75px;font-family:Liberation Sans;font-size:7px;font-weight:normal;font-style:normal;color:#9a9a9a;transform:scaleX(0.9967);transform-origin:0 0;text-shadow:0.2px 0 0 #9a9a9a;'>May ..</div>
<div class='t' style='left:701.86px;top:377.75px;font-family:Liberation Sans;font-size:7px;font-weight:normal;font-style:normal;color:#9a9a9a;transform:scaleX(0.8415);transform-origin:0 0;text-shadow:0.2px 0 0 #9a9a9a;'>Jul 20..</div>
<div class='t' style='left:721.98px;top:377.75px;font-family:Liberation Sans;font-size:7px;font-weight:normal;font-style:normal;color:#9a9a9a;transform:scaleX(0.9390);transform-origin:0 0;text-shadow:0.2px 0 0 #9a9a9a;'>Sept ..</div>
<div class='t' style='left:742.10px;top:377.75px;font-family:Liberation Sans;font-size:7px;font-weight:normal;font-style:normal;color:#9a9a9a;transform:scaleX(0.8563);transform-origin:0 0;text-shadow:0.2px 0 0 #9a9a9a;'>Nov 2..</div>
<div class='t' style='left:762.22px;top:377.75px;font-family:Liberation Sans;font-size:7px;font-weight:normal;font-style:normal;color:#9a9a9a;transform:scaleX(0.9041);transform-origin:0 0;text-shadow:0.2px 0 0 #9a9a9a;'>Jan 2..</div>
<div class='t' style='left:782.34px;top:377.75px;font-family:Liberation Sans;font-size:7px;font-weight:normal;font-style:normal;color:#9a9a9a;transform:scaleX(0.8717);transform-origin:0 0;text-shadow:0.2px 0 0 #9a9a9a;'>Mar 2..</div>
<div class='t' style='left:802.46px;top:377.75px;font-family:Liberation Sans;font-size:7px;font-weight:normal;font-style:normal;color:#9a9a9a;transform:scaleX(0.9967);transform-origin:0 0;text-shadow:0.2px 0 0 #9a9a9a;'>May ..</div>
<div class='t' style='left:822.58px;top:377.75px;font-family:Liberation Sans;font-size:7px;font-weight:normal;font-style:normal;color:#9a9a9a;transform:scaleX(0.8415);transform-origin:0 0;text-shadow:0.2px 0 0 #9a9a9a;'>Jul 20..</div>
<div class='t' style='left:842.70px;top:377.75px;font-family:Liberation Sans;font-size:7px;font-weight:normal;font-style:normal;color:#9a9a9a;transform:scaleX(0.9390);transform-origin:0 0;text-shadow:0.2px 0 0 #9a9a9a;'>Sept ..</div>
<div class='t' style='left:862.82px;top:377.75px;font-family:Liberation Sans;font-size:7px;font-weight:normal;font-style:normal;color:#9a9a9a;transform:scaleX(0.8563);transform-origin:0 0;text-shadow:0.2px 0 0 #9a9a9a;'>Nov 2..</div>
<div class='t' style='left:882.94px;top:377.75px;font-family:Liberation Sans;font-size:7px;font-weight:normal;font-style:normal;color:#9a9a9a;transform:scaleX(0.9041);transform-origin:0 0;text-shadow:0.2px 0 0 #9a9a9a;'>Jan 2..</div>
<div class='t' style='left:903.06px;top:377.75px;font-family:Liberation Sans;font-size:7px;font-weight:normal;font-style:normal;color:#9a9a9a;transform:scaleX(0.8717);transform-origin:0 0;text-shadow:0.2px 0 0 #9a9a9a;'>Mar 2..</div>
<div class='t' style='left:923.18px;top:377.75px;font-family:Liberation Sans;font-size:7px;font-weight:normal;font-style:normal;color:#9a9a9a;transform:scaleX(0.9967);transform-origin:0 0;text-shadow:0.2px 0 0 #9a9a9a;'>May ..</div>
<div class='t' style='left:943.30px;top:377.75px;font-family:Liberation Sans;font-size:7px;font-weight:normal;font-style:normal;color:#9a9a9a;transform:scaleX(0.8415);transform-origin:0 0;text-shadow:0.2px 0 0 #9a9a9a;'>Jul 20..</div>
<div class='t' style='left:963.42px;top:377.75px;font-family:Liberation Sans;font-size:7px;font-weight:normal;font-style:normal;color:#9a9a9a;transform:scaleX(0.9390);transform-origin:0 0;text-shadow:0.2px 0 0 #9a9a9a;'>Sept ..</div>
<div class='t' style='left:983.54px;top:377.75px;font-family:Liberation Sans;font-size:7px;font-weight:normal;font-style:normal;color:#9a9a9a;transform:scaleX(0.8563);transform-origin:0 0;text-shadow:0.2px 0 0 #9a9a9a;'>Nov 2..</div>
<div class='t' style='left:536.00px;top:286.65px;font-family:Liberation Sans;font-size:7px;font-weight:normal;font-style:normal;color:#444;transform:scaleX(0.9412);transform-origin:0 0;text-shadow:0.2px 0 0 #444;'>2,424</div>
<div class='t' style='left:1000.00px;top:277.55px;font-family:Liberation Sans;font-size:7px;font-weight:normal;font-style:normal;color:#444;transform:scaleX(0.9412);transform-origin:0 0;text-shadow:0.2px 0 0 #444;'>2,687</div>
<div class='t' style='left:754.00px;top:253.95px;font-family:Liberation Sans;font-size:7px;font-weight:normal;font-style:normal;color:#8e8e8e;transform:scaleX(0.9907);transform-origin:0 0;text-shadow:0.2px 0 0 #8e8e8e;'>Average:2,956</div>
<div class='t' style='left:517.30px;top:418.88px;font-family:Liberation Sans;font-size:7.2px;font-weight:normal;font-style:normal;color:#858585;transform:scaleX(0.8350);transform-origin:0 0;text-shadow:0.2px 0 0 #858585;'>VIOLENCE AGAINST THE PERSON</div>
<div class='t' style='left:646.70px;top:418.88px;font-family:Liberation Sans;font-size:7.2px;font-weight:normal;font-style:normal;color:#858585;transform:scaleX(0.9500);transform-origin:0 0;text-shadow:0.2px 0 0 #858585;'>39,725</div>
<div class='t' style='left:517.30px;top:429.66px;font-family:Liberation Sans;font-size:7.2px;font-weight:normal;font-style:normal;color:#858585;transform:scaleX(0.8350);transform-origin:0 0;text-shadow:0.2px 0 0 #858585;'>THEFT</div>
<div class='t' style='left:646.70px;top:429.66px;font-family:Liberation Sans;font-size:7.2px;font-weight:normal;font-style:normal;color:#858585;transform:scaleX(0.9500);transform-origin:0 0;text-shadow:0.2px 0 0 #858585;'>41,035</div>
<div class='t' style='left:517.30px;top:440.44px;font-family:Liberation Sans;font-size:7.2px;font-weight:normal;font-style:normal;color:#858585;transform:scaleX(0.8350);transform-origin:0 0;text-shadow:0.2px 0 0 #858585;'>DRUG OFFENCES</div>
<div class='t' style='left:646.70px;top:440.44px;font-family:Liberation Sans;font-size:7.2px;font-weight:normal;font-style:normal;color:#858585;transform:scaleX(0.9500);transform-origin:0 0;text-shadow:0.2px 0 0 #858585;'>9,196</div>
<div class='t' style='left:517.30px;top:451.22px;font-family:Liberation Sans;font-size:7.2px;font-weight:normal;font-style:normal;color:#858585;transform:scaleX(0.8350);transform-origin:0 0;text-shadow:0.2px 0 0 #858585;'>VEHICLE OFFENCES</div>
<div class='t' style='left:646.70px;top:451.22px;font-family:Liberation Sans;font-size:7.2px;font-weight:normal;font-style:normal;color:#858585;transform:scaleX(0.9500);transform-origin:0 0;text-shadow:0.2px 0 0 #858585;'>12,473</div>
<div class='t' style='left:517.30px;top:462.00px;font-family:Liberation Sans;font-size:7.2px;font-weight:normal;font-style:normal;color:#858585;transform:scaleX(0.8350);transform-origin:0 0;text-shadow:0.2px 0 0 #858585;'>PUBLIC ORDER OFFENCES</div>
<div class='t' style='left:646.70px;top:462.00px;font-family:Liberation Sans;font-size:7.2px;font-weight:normal;font-style:normal;color:#858585;transform:scaleX(0.9500);transform-origin:0 0;text-shadow:0.2px 0 0 #858585;'>9,859</div>
<div class='t' style='left:517.30px;top:472.78px;font-family:Liberation Sans;font-size:7.2px;font-weight:normal;font-style:normal;color:#858585;transform:scaleX(0.8350);transform-origin:0 0;text-shadow:0.2px 0 0 #858585;'>BURGLARY</div>
<div class='t' style='left:646.70px;top:472.78px;font-family:Liberation Sans;font-size:7.2px;font-weight:normal;font-style:normal;color:#858585;transform:scaleX(0.9500);transform-origin:0 0;text-shadow:0.2px 0 0 #858585;'>9,547</div>
<div class='t' style='left:517.30px;top:483.56px;font-family:Liberation Sans;font-size:7.2px;font-weight:normal;font-style:normal;color:#858585;transform:scaleX(0.8350);transform-origin:0 0;text-shadow:0.2px 0 0 #858585;'>ARSON AND CRIMINAL DAMAGE</div>
<div class='t' style='left:646.70px;top:483.56px;font-family:Liberation Sans;font-size:7.2px;font-weight:normal;font-style:normal;color:#858585;transform:scaleX(0.9500);transform-origin:0 0;text-shadow:0.2px 0 0 #858585;'>8,205</div>
<div class='t' style='left:517.30px;top:494.34px;font-family:Liberation Sans;font-size:7.2px;font-weight:normal;font-style:normal;color:#858585;transform:scaleX(0.8350);transform-origin:0 0;text-shadow:0.2px 0 0 #858585;'>ROBBERY</div>
<div class='t' style='left:646.70px;top:494.34px;font-family:Liberation Sans;font-size:7.2px;font-weight:normal;font-style:normal;color:#858585;transform:scaleX(0.9500);transform-origin:0 0;text-shadow:0.2px 0 0 #858585;'>5,048</div>
<div class='t' style='left:517.30px;top:505.12px;font-family:Liberation Sans;font-size:7.2px;font-weight:normal;font-style:normal;color:#858585;transform:scaleX(0.8350);transform-origin:0 0;text-shadow:0.2px 0 0 #858585;'>SEXUAL OFFENCES</div>
<div class='t' style='left:646.70px;top:505.12px;font-family:Liberation Sans;font-size:7.2px;font-weight:normal;font-style:normal;color:#858585;transform:scaleX(0.9500);transform-origin:0 0;text-shadow:0.2px 0 0 #858585;'>4,131</div>
<div class='t' style='left:517.30px;top:515.90px;font-family:Liberation Sans;font-size:7.2px;font-weight:normal;font-style:normal;color:#858585;transform:scaleX(0.8350);transform-origin:0 0;text-shadow:0.2px 0 0 #858585;'>MISCELLANEOUS CRIMES AGAINST SOCI..</div>
<div class='t' style='left:646.70px;top:515.90px;font-family:Liberation Sans;font-size:7.2px;font-weight:normal;font-style:normal;color:#858585;transform:scaleX(0.9500);transform-origin:0 0;text-shadow:0.2px 0 0 #858585;'>1,654</div>
<div class='t' style='left:517.30px;top:526.68px;font-family:Liberation Sans;font-size:7.2px;font-weight:normal;font-style:normal;color:#858585;transform:scaleX(0.8350);transform-origin:0 0;text-shadow:0.2px 0 0 #858585;'>POSSESSION OF WEAPONS</div>
<div class='t' style='left:646.70px;top:526.68px;font-family:Liberation Sans;font-size:7.2px;font-weight:normal;font-style:normal;color:#858585;transform:scaleX(0.9500);transform-origin:0 0;text-shadow:0.2px 0 0 #858585;'>1,022</div>
<div class='t' style='left:688.00px;top:534.28px;font-family:Liberation Sans;font-size:7.2px;font-weight:normal;font-style:normal;color:#9a9a9a;transform:scaleX(0.9500);transform-origin:0 0;text-shadow:0.2px 0 0 #9a9a9a;'>0K</div>
<div class='t' style='left:717.95px;top:534.28px;font-family:Liberation Sans;font-size:7.2px;font-weight:normal;font-style:normal;color:#9a9a9a;transform:scaleX(0.9500);transform-origin:0 0;text-shadow:0.2px 0 0 #9a9a9a;'>5K</div>
<div class='t' style='left:751.48px;top:534.28px;font-family:Liberation Sans;font-size:7.2px;font-weight:normal;font-style:normal;color:#9a9a9a;transform:scaleX(0.9500);transform-origin:0 0;text-shadow:0.2px 0 0 #9a9a9a;'>10K</div>
<div class='t' style='left:786.91px;top:534.28px;font-family:Liberation Sans;font-size:7.2px;font-weight:normal;font-style:normal;color:#9a9a9a;transform:scaleX(0.9500);transform-origin:0 0;text-shadow:0.2px 0 0 #9a9a9a;'>15K</div>
<div class='t' style='left:822.34px;top:534.28px;font-family:Liberation Sans;font-size:7.2px;font-weight:normal;font-style:normal;color:#9a9a9a;transform:scaleX(0.9500);transform-origin:0 0;text-shadow:0.2px 0 0 #9a9a9a;'>20K</div>
<div class='t' style='left:857.77px;top:534.28px;font-family:Liberation Sans;font-size:7.2px;font-weight:normal;font-style:normal;color:#9a9a9a;transform:scaleX(0.9500);transform-origin:0 0;text-shadow:0.2px 0 0 #9a9a9a;'>25K</div>
<div class='t' style='left:893.20px;top:534.28px;font-family:Liberation Sans;font-size:7.2px;font-weight:normal;font-style:normal;color:#9a9a9a;transform:scaleX(0.9500);transform-origin:0 0;text-shadow:0.2px 0 0 #9a9a9a;'>30K</div>
<div class='t' style='left:928.63px;top:534.28px;font-family:Liberation Sans;font-size:7.2px;font-weight:normal;font-style:normal;color:#9a9a9a;transform:scaleX(0.9500);transform-origin:0 0;text-shadow:0.2px 0 0 #9a9a9a;'>35K</div>
<div class='t' style='left:964.06px;top:534.28px;font-family:Liberation Sans;font-size:7.2px;font-weight:normal;font-style:normal;color:#9a9a9a;transform:scaleX(0.9500);transform-origin:0 0;text-shadow:0.2px 0 0 #9a9a9a;'>40K</div>
<div class='t' style='left:994.34px;top:534.28px;font-family:Liberation Sans;font-size:7.2px;font-weight:normal;font-style:normal;color:#9a9a9a;transform:scaleX(0.9500);transform-origin:0 0;text-shadow:0.2px 0 0 #9a9a9a;'>45K</div>
<div class='t' style='left:247.65px;top:270.43px;font-family:Liberation Sans;font-size:6.9px;font-weight:normal;font-style:normal;color:#c8d0d0;transform:scaleX(1.0105);transform-origin:0 0;'>Enfield</div>
<div class='t' style='left:192.65px;top:295.93px;font-family:Liberation Sans;font-size:6.9px;font-weight:normal;font-style:normal;color:#c8d0d0;transform:scaleX(1.0092);transform-origin:0 0;'>Barnet</div>
<div class='t' style='left:133.05px;top:308.63px;font-family:Liberation Sans;font-size:6.9px;font-weight:normal;font-style:normal;color:#c8d0d0;transform:scaleX(0.9857);transform-origin:0 0;'>Harrow</div>
<div class='t' style='left:235.20px;top:314.43px;font-family:Liberation Sans;font-size:6.9px;font-weight:normal;font-style:normal;color:#c8d0d0;transform:scaleX(0.9935);transform-origin:0 0;'>Haringey</div>
<div class='t' style='left:267.05px;top:311.53px;font-family:Liberation Sans;font-size:6.9px;font-weight:normal;font-style:normal;color:#c8d0d0;transform:scaleX(0.9902);transform-origin:0 0;'>Waltham Forest</div>
<div class='t' style='left:381.70px;top:333.83px;font-family:Liberation Sans;font-size:6.9px;font-weight:normal;font-style:normal;color:#c8d0d0;transform:scaleX(0.9863);transform-origin:0 0;'>Havering</div>
<div class='t' style='left:83.50px;top:337.93px;font-family:Liberation Sans;font-size:6.9px;font-weight:normal;font-style:normal;color:#c8d0d0;transform:scaleX(1.0243);transform-origin:0 0;'>Hillingdon</div>
<div class='t' style='left:168.65px;top:337.13px;font-family:Liberation Sans;font-size:6.9px;font-weight:normal;font-style:normal;color:#c8d0d0;'>Brent</div>
<div class='t' style='left:234.00px;top:344.23px;font-family:Liberation Sans;font-size:6.9px;font-weight:normal;font-style:normal;color:#c8d0d0;transform:scaleX(1.0985);transform-origin:0 0;'>Islington</div>
<div class='t' style='left:321.80px;top:347.23px;font-family:Liberation Sans;font-size:6.9px;font-weight:normal;font-style:normal;color:#c8d0d0;transform:scaleX(0.9723);transform-origin:0 0;'>Barking and Dagenham</div>
<div class='t' style='left:138.85px;top:363.03px;font-family:Liberation Sans;font-size:6.9px;font-weight:normal;font-style:normal;color:#c8d0d0;transform:scaleX(0.9866);transform-origin:0 0;'>Ealing</div>
<div class='t' style='left:206.00px;top:369.53px;font-family:Liberation Sans;font-size:6.9px;font-weight:normal;font-style:normal;color:#c8d0d0;transform:scaleX(1.0217);transform-origin:0 0;'>Westminster</div>
<div class='t' style='left:157.70px;top:382.53px;font-family:Liberation Sans;font-size:6.9px;font-weight:normal;font-style:normal;color:#c8d0d0;transform:scaleX(0.9854);transform-origin:0 0;'>Hammersmith and Fulham</div>
<div class='t' style='left:59.30px;top:395.23px;font-family:Liberation Sans;font-size:6.9px;font-weight:normal;font-style:normal;color:#c8d0d0;transform:scaleX(0.9646);transform-origin:0 0;'>Non MET police force</div>
<div class='t' style='left:247.05px;top:397.63px;font-family:Liberation Sans;font-size:6.9px;font-weight:normal;font-style:normal;color:#c8d0d0;'>Southwark</div>
<div class='t' style='left:305.75px;top:397.83px;font-family:Liberation Sans;font-size:6.9px;font-weight:normal;font-style:normal;color:#c8d0d0;transform:scaleX(0.9624);transform-origin:0 0;'>Greenwich</div>
<div class='t' style='left:350.65px;top:407.43px;font-family:Liberation Sans;font-size:6.9px;font-weight:normal;font-style:normal;color:#c8d0d0;transform:scaleX(0.9619);transform-origin:0 0;'>Bexley</div>
<div class='t' style='left:194.40px;top:413.53px;font-family:Liberation Sans;font-size:6.9px;font-weight:normal;font-style:normal;color:#c8d0d0;transform:scaleX(1.0251);transform-origin:0 0;'>Wandsworth</div>
<div class='t' style='left:272.65px;top:416.53px;font-family:Liberation Sans;font-size:6.9px;font-weight:normal;font-style:normal;color:#c8d0d0;transform:scaleX(0.9764);transform-origin:0 0;'>Lewisham</div>
<div class='t' style='left:121.50px;top:420.03px;font-family:Liberation Sans;font-size:6.9px;font-weight:normal;font-style:normal;color:#c8d0d0;transform:scaleX(0.9526);transform-origin:0 0;'>Richmond upon Thames</div>
<div class='t' style='left:197.20px;top:443.83px;font-family:Liberation Sans;font-size:6.9px;font-weight:normal;font-style:normal;color:#c8d0d0;transform:scaleX(1.0535);transform-origin:0 0;'>Merton</div>
<div class='t' style='left:134.25px;top:459.33px;font-family:Liberation Sans;font-size:6.9px;font-weight:normal;font-style:normal;color:#c8d0d0;transform:scaleX(0.9682);transform-origin:0 0;'>Kingston upon Thames</div>
<div class='t' style='left:307.15px;top:471.33px;font-family:Liberation Sans;font-size:6.9px;font-weight:normal;font-style:normal;color:#c8d0d0;transform:scaleX(1.0087);transform-origin:0 0;'>Bromley</div>
<div class='t' style='left:206.80px;top:478.33px;font-family:Liberation Sans;font-size:6.9px;font-weight:normal;font-style:normal;color:#c8d0d0;transform:scaleX(1.0441);transform-origin:0 0;'>Sutton</div>
<div class='t' style='left:245.10px;top:483.23px;font-family:Liberation Sans;font-size:6.9px;font-weight:normal;font-style:normal;color:#c8d0d0;transform:scaleX(0.9598);transform-origin:0 0;'>Croydon</div>
<div class='t' style='left:259.30px;top:367.94px;font-family:Liberation Sans;font-size:6.9px;font-weight:normal;font-style:normal;color:#2a2a2a;transform:scaleX(0.9873);transform-origin:0 0;'>Tower Hamlets</div>
<div class="r" style="left:514px;top:529.6px;width:172px;height:8px;background:#fff"></div>
<div class="r" style="left:514px;top:529px;width:494px;height:0.9px;background:#e6e6e6"></div>
</body></html>
